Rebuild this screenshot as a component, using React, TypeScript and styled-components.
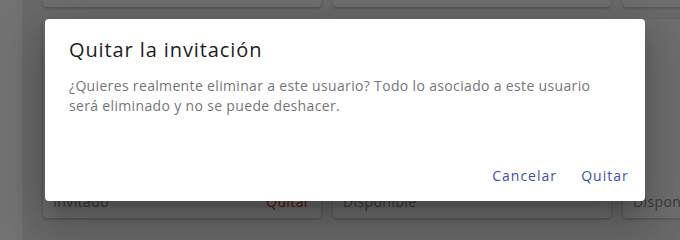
import styled, { createGlobalStyle } from "styled-components";

const GlobalStyle = createGlobalStyle`
    html, body, #root {
        margin: 0;
        padding: 0;
        height: 100%;
        overflow: hidden;
    }
    body {
        font-family: "Open Sans", "DejaVu Sans", sans-serif;
    }
`;

const Page = styled.div`
    position: relative;
    width: 100%;
    height: 100vh;
    display: flex;
    overflow: hidden;
    background-color: #c8c8c8;
`;
const SideBar = styled.div`
    flex: 0 0 22px;
    background-color: #e4e4e4;
`;
const Main = styled.div`
    flex: 1;
    min-width: 0;
    overflow: hidden;
    padding-left: 21px;
    background-color: #d2d2d2;
`;
const CardGrid = styled.div`
    display: grid;
    grid-template-columns: repeat(3, 278px);
    grid-template-rows: 7px 199px;
    column-gap: 12px;
    row-gap: 12px;
`;
const Card = styled.div`
    background-color: #dcdcdc;
    border-radius: 0 0 4px 4px;
    box-shadow: 0 1px 3px rgba(0, 0, 0, 0.25);
    display: flex;
    align-items: flex-end;
    justify-content: space-between;
    padding: 0 11px 7px 10px;
    font-size: 14px;
    letter-spacing: 0.4px;
    white-space: nowrap;
    &.full {
        border-radius: 4px;
    }
`;
const CardLabel = styled.span<{ $danger?: boolean }>`
    color: ${(p) => (p.$danger ? "#b02a2a" : "#767676")};
`;

const Overlay = styled.div`
    position: absolute;
    inset: 0;
    background-color: rgba(0, 0, 0, 0.5);
    display: flex;
    align-items: flex-start;
    padding: 19px 0 0 45px;
`;
const Dialog = styled.div`
    width: 600px;
    height: 182px;
    background-color: #ffffff;
    border-radius: 4px;
    box-shadow: 0 11px 15px -7px rgba(0, 0, 0, 0.2), 0 24px 38px 3px rgba(0, 0, 0, 0.14),
        0 9px 46px 8px rgba(0, 0, 0, 0.12);
    display: flex;
    flex-direction: column;
    box-sizing: border-box;
`;
const Title = styled.h2`
    margin: 0;
    padding: 15px 24px 0 24px;
    font-size: 20px;
    font-weight: 500;
    line-height: 32px;
    letter-spacing: 0.9px;
    color: #1c1c1c;
`;
const Content = styled.div`
    flex: 1;
    padding: 10px 24px 0 24px;
`;
const ContentText = styled.p`
    margin: 0;
    max-width: 545px;
    font-size: 14px;
    line-height: 20px;
    letter-spacing: 0.34px;
    color: #767676;
`;
const Actions = styled.div`
    display: flex;
    justify-content: flex-end;
    align-items: center;
    gap: 8px;
    padding: 8px;
`;
const Button = styled.button`
    min-width: 64px;
    height: 36px;
    padding: 6px 8px;
    border: none;
    background: none;
    font-family: inherit;
    font-size: 14px;
    font-weight: 500;
    letter-spacing: 1px;
    color: #3f4db8;
    cursor: pointer;
    border-radius: 4px;
`;

export default function App() {
    const columns = ["Invitado", "Disponible", "Disponible"];
    return (
        <>
            <GlobalStyle />
            <Page>
                <SideBar />
                <Main>
                    <CardGrid>
                        {columns.map((_, index) => (
                            <Card key={"top" + index} />
                        ))}
                        {columns.map((label, index) => (
                            <Card key={"bottom" + index} className="full">
                                <CardLabel>{label}</CardLabel>
                                {index === 0 && <CardLabel $danger>Quitar</CardLabel>}
                            </Card>
                        ))}
                    </CardGrid>
                </Main>
                <Overlay>
                    <Dialog>
                        <Title>Quitar la invitación</Title>
                        <Content>
                            <ContentText>
                                ¿Quieres realmente eliminar a este usuario? Todo lo asociado a este usuario
                                será eliminado y no se puede deshacer.
                            </ContentText>
                        </Content>
                        <Actions>
                            <Button>Cancelar</Button>
                            <Button>Quitar</Button>
                        </Actions>
                    </Dialog>
                </Overlay>
            </Page>
        </>
    );
}
